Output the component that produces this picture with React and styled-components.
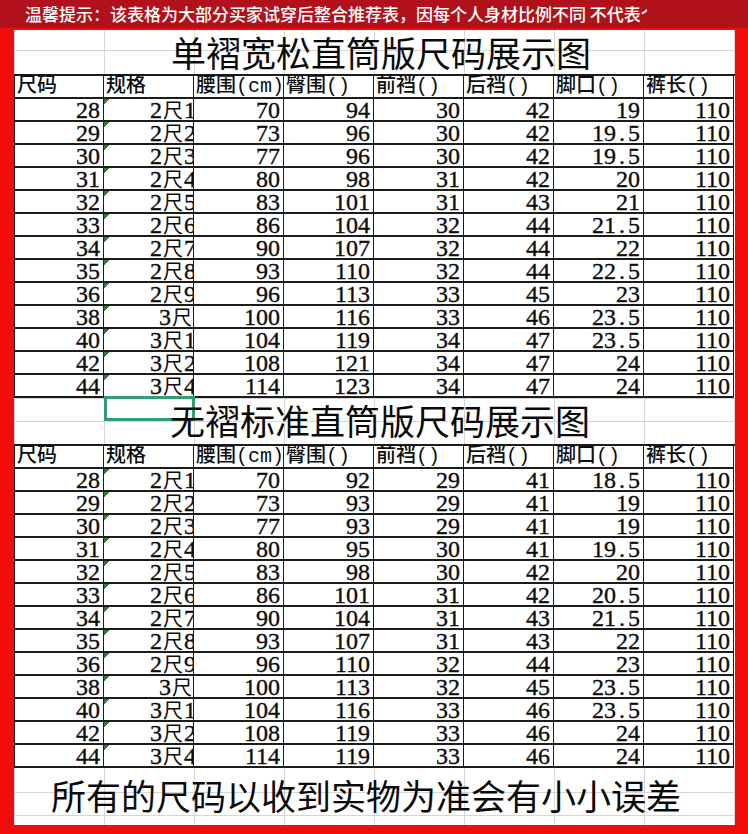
import React from 'react';
import styled, { createGlobalStyle } from 'styled-components';

const GlobalStyle = createGlobalStyle`
  html, body { margin: 0; padding: 0; background: #f20d0d; }
  * { box-sizing: border-box; }
`;

const COLS = ['尺码', '规格', '腰围(cm)', '臀围()', '前裆()', '后裆()', '脚口()', '裤长()'];

// 单褶宽松
const loose = [
    ['28', '2尺1', '70', '94', '30', '42', '19', '110'],
    ['29', '2尺2', '73', '96', '30', '42', '19.5', '110'],
    ['30', '2尺3', '77', '96', '30', '42', '19.5', '110'],
    ['31', '2尺4', '80', '98', '31', '42', '20', '110'],
    ['32', '2尺5', '83', '101', '31', '43', '21', '110'],
    ['33', '2尺6', '86', '104', '32', '44', '21.5', '110'],
    ['34', '2尺7', '90', '107', '32', '44', '22', '110'],
    ['35', '2尺8', '93', '110', '32', '44', '22.5', '110'],
    ['36', '2尺9', '96', '113', '33', '45', '23', '110'],
    ['38', '3尺', '100', '116', '33', '46', '23.5', '110'],
    ['40', '3尺1', '104', '119', '34', '47', '23.5', '110'],
    ['42', '3尺2', '108', '121', '34', '47', '24', '110'],
    ['44', '3尺4', '114', '123', '34', '47', '24', '110'],
];

// 无褶标准
const standard = [
    ['28', '2尺1', '70', '92', '29', '41', '18.5', '110'],
    ['29', '2尺2', '73', '93', '29', '41', '19', '110'],
    ['30', '2尺3', '77', '93', '29', '41', '19', '110'],
    ['31', '2尺4', '80', '95', '30', '41', '19.5', '110'],
    ['32', '2尺5', '83', '98', '30', '42', '20', '110'],
    ['33', '2尺6', '86', '101', '31', '42', '20.5', '110'],
    ['34', '2尺7', '90', '104', '31', '43', '21.5', '110'],
    ['35', '2尺8', '93', '107', '31', '43', '22', '110'],
    ['36', '2尺9', '96', '110', '32', '44', '23', '110'],
    ['38', '3尺', '100', '113', '32', '45', '23.5', '110'],
    ['40', '3尺1', '104', '116', '33', '46', '23.5', '110'],
    ['42', '3尺2', '108', '119', '33', '46', '24', '110'],
    ['44', '3尺4', '114', '119', '33', '46', '24', '110'],
];

const Frame = styled.div`
    width: 748px;
    height: 834px;
    background: #f20d0d;
    display: flex;
    flex-direction: column;
    overflow: hidden;
`;

const Banner = styled.div`
    height: 28px;
    flex: none;
    background: #b0111b;
    display: flex;
    align-items: center;
    padding-left: 25px;
`;

const Tip = styled.div`
    width: 622px;
    overflow: hidden;
    white-space: nowrap;
    color: #fff;
    font-family: "Noto Sans CJK SC", sans-serif;
    font-size: 17px;
    font-weight: 500;
    line-height: 24px;
`;

const Body = styled.div`
    flex: 1;
    display: flex;
    padding: 2px 13px 9px 14px;
`;

const Sheet = styled.div`
    flex: 1;
    background: #fff;
    display: flex;
    flex-direction: column;
    overflow: hidden;
`;

const Band = styled.div`
    height: ${p => p.$height};
    flex: ${p => (p.$grow ? 1 : 'none')};
    display: grid;
    grid-template-columns: repeat(8, 90px);
    grid-template-rows: ${p => p.$rows};
    background-image:
        repeating-linear-gradient(90deg, #d6d6d6 0 1px, transparent 1px 90px),
        repeating-linear-gradient(180deg, transparent 0 22px, #d6d6d6 22px 23px);
    background-position: 0 0, 0 ${p => p.$offset}px;
`;

const Title = styled.div`
    grid-area: 1 / 1 / -1 / -1;
    display: flex;
    align-items: center;
    justify-content: center;
    padding-left: ${p => Math.max(p.$shift, 0) * 2}px;
    padding-right: ${p => Math.max(-p.$shift, 0) * 2}px;
    padding-bottom: ${p => p.$lift || 0}px;
    font-family: "Noto Sans CJK SC", sans-serif;
    font-size: 35px;
    line-height: 40px;
    color: #0a0a0a;
    white-space: nowrap;
    z-index: 1;
`;

const Selected = styled.div`
    grid-area: 1 / 2 / 2 / 3;
    margin: -2px -1px 0 0;
    border: 3px solid #2f9e70;
`;

const Table = styled.div`
    flex: none;
    display: grid;
    grid-template-columns: 89px repeat(7, 90px);
    grid-auto-rows: 23px;
    border-left: 1px solid #1c1c1c;
    border-top: 2px solid #1c1c1c;
    background: #fff;
`;

const Cell = styled.div`
    display: flex;
    align-items: flex-end;
    justify-content: flex-end;
    padding: 0 ${p => (p.$spec ? 0 : 3)}px 0 0;
    border-right: 1px solid #1c1c1c;
    border-bottom: 2px solid #1c1c1c;
    overflow: ${p => (p.$spec ? 'hidden' : 'visible')};
    white-space: nowrap;
    color: #0d0d0d;
    font-family: "Liberation Serif", "Noto Sans CJK SC", serif;
    font-size: 24px;
    line-height: 20px;
    -webkit-text-stroke: 0.35px #0d0d0d;
    background: ${p => (p.$spec
        ? 'linear-gradient(135deg, #2e7d32 0 4px, transparent 4px)'
        : 'transparent')};
`;

const HeadCell = styled(Cell)`
    justify-content: flex-start;
    padding: 0 0 0 2px;
    font-family: "Liberation Mono", "Noto Sans CJK SC", monospace;
    font-size: 20px;
    font-weight: 500;
    line-height: 21px;
    -webkit-text-stroke: 0;
`;

const Chi = styled.span`
    font-family: "Noto Sans CJK SC", sans-serif;
    font-size: 20px;
    margin: 0 1px;
    -webkit-text-stroke: 0;
`;

const Cut = styled.span`
    margin-right: -3px;
`;

const Dot = styled.span`
    padding: 0 3px;
`;

// 数字里的小数点按等宽处理
const Num = ({ value }) => {
    const [a, b] = value.split('.');
    return b === undefined ? value : <>{a}<Dot>.</Dot>{b}</>;
};

const Spec = ({ value }) => {
    const [a, b] = value.split('尺');
    return <>{a}<Chi>尺</Chi>{b ? <Cut>{b}</Cut> : null}</>;
};

const SizeTable = ({ rows }) => (
    <Table>
        {COLS.map(c => <HeadCell key={c}>{c}</HeadCell>)}
        {rows.map((row, i) => row.map((v, j) => (
            <Cell key={i + '-' + j} $spec={j === 1}>
                {j === 1 ? <Spec value={v} /> : <Num value={v} />}
            </Cell>
        )))}
    </Table>
);

const App = () => (
    <Frame>
        <GlobalStyle />
        <Banner>
            <Tip>温馨提示：该表格为大部分买家试穿后整合推荐表，因每个人身材比例不同 不代表个</Tip>
        </Banner>
        <Body>
            <Sheet>
                <Band $height="44px" $rows="1fr" $offset={-2}>
                    <Title $shift={7} $lift={1}>单褶宽松直筒版尺码展示图</Title>
                </Band>
                <SizeTable rows={loose} />
                <Band $height="46px" $rows="23px 23px" $offset={1}>
                    <Selected />
                    <Title $shift={6} $lift={2}>无褶标准直筒版尺码展示图</Title>
                </Band>
                <SizeTable rows={standard} />
                <Band $grow $rows="1fr" $offset={2}>
                    <Title $shift={-8} $lift={3}>所有的尺码以收到实物为准会有小小误差</Title>
                </Band>
            </Sheet>
        </Body>
    </Frame>
);

export default App;
